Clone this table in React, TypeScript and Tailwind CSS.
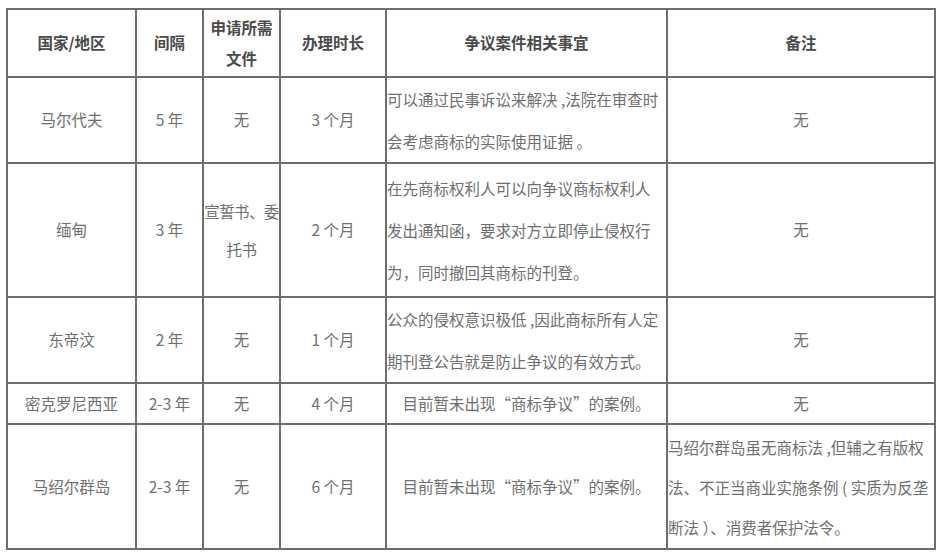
import React from "react";

const font = { fontFamily: '"Noto Sans CJK SC", "Noto Sans", sans-serif' };

type Row = {
  h: string;
  country: string;
  gap: string;
  docs: React.ReactNode;
  time: string;
  dispute: React.ReactNode;
  disputeLeft?: boolean;
  note: React.ReactNode;
  noteLeft?: boolean;
};

const rows: Row[] = [
  {
    h: "h-[85px]",
    country: "马尔代夫",
    gap: "5 年",
    docs: "无",
    time: "3 个月",
    dispute: (
      <>
        可以通过民事诉讼来解决 ,法院在审查时
        <br />
        会考虑商标的实际使用证据 。
      </>
    ),
    disputeLeft: true,
    note: "无",
  },
  {
    h: "h-[134px]",
    country: "缅甸",
    gap: "3 年",
    docs: (
      <span className="block leading-[38px] tracking-[-0.6px]">
        宣誓书、委
        <br />
        托书
      </span>
    ),
    time: "2 个月",
    dispute: (
      <>
        在先商标权利人可以向争议商标权利人
        <br />
        发出通知函，要求对方立即停止侵权行
        <br />
        为，同时撤回其商标的刊登。
      </>
    ),
    disputeLeft: true,
    note: "无",
  },
  {
    h: "h-[84px]",
    country: "东帝汶",
    gap: "2 年",
    docs: "无",
    time: "1 个月",
    dispute: (
      <>
        公众的侵权意识极低 ,因此商标所有人定
        <br />
        期刊登公告就是防止争议的有效方式。
      </>
    ),
    disputeLeft: true,
    note: "无",
  },
  {
    h: "h-[41px]",
    country: "密克罗尼西亚",
    gap: "2-3 年",
    docs: "无",
    time: "4 个月",
    dispute: "目前暂未出现“商标争议”的案例。",
    note: "无",
  },
  {
    h: "h-[125px]",
    country: "马绍尔群岛",
    gap: "2-3 年",
    docs: "无",
    time: "6 个月",
    dispute: "目前暂未出现“商标争议”的案例。",
    note: (
      <span className="block leading-[40px]">
        马绍尔群岛虽无商标法 ,但辅之有版权
        <br />
        法、不正当商业实施条例 ( 实质为反垄
        <br />
        断法 ）、消费者保护法令。
      </span>
    ),
    noteLeft: true,
  },
];

const cell = "border-2 border-[#6e6e6e] p-0 align-middle overflow-hidden";

export default function App() {
  return (
    <div className="w-[940px] h-[552px] bg-white overflow-hidden pl-[6px] pt-[8px]" style={font}>
      <table className="table-fixed border-collapse w-[929px] text-[15.5px] text-[#6f6f6f]">
        <colgroup>
          <col className="w-[129px]" />
          <col className="w-[67px]" />
          <col className="w-[77px]" />
          <col className="w-[106px]" />
          <col className="w-[281px]" />
          <col className="w-[268px]" />
        </colgroup>
        <thead>
          <tr className="h-[68px] font-bold text-[#4a4a4a] text-center">
            <th className={cell}>国家/地区</th>
            <th className={cell}>间隔</th>
            <th className={`${cell} leading-[31px]`}>
              申请所需
              <br />
              文件
            </th>
            <th className={cell}>办理时长</th>
            <th className={cell}>争议案件相关事宜</th>
            <th className={cell}>备注</th>
          </tr>
        </thead>
        <tbody>
          {rows.map((r) => (
            <tr key={r.country} className={`${r.h} text-center`}>
              <td className={cell}>{r.country}</td>
              <td className={cell}>{r.gap}</td>
              <td className={`${cell} whitespace-nowrap`}>{r.docs}</td>
              <td className={cell}>{r.time}</td>
              <td
                className={`${cell} whitespace-nowrap ${
                  r.disputeLeft ? "text-left leading-[42px]" : "text-center"
                }`}
              >
                {r.dispute}
              </td>
              <td
                className={`${cell} whitespace-nowrap ${
                  r.noteLeft ? "text-left" : "text-center"
                }`}
              >
                {r.note}
              </td>
            </tr>
          ))}
        </tbody>
      </table>
    </div>
  );
}
